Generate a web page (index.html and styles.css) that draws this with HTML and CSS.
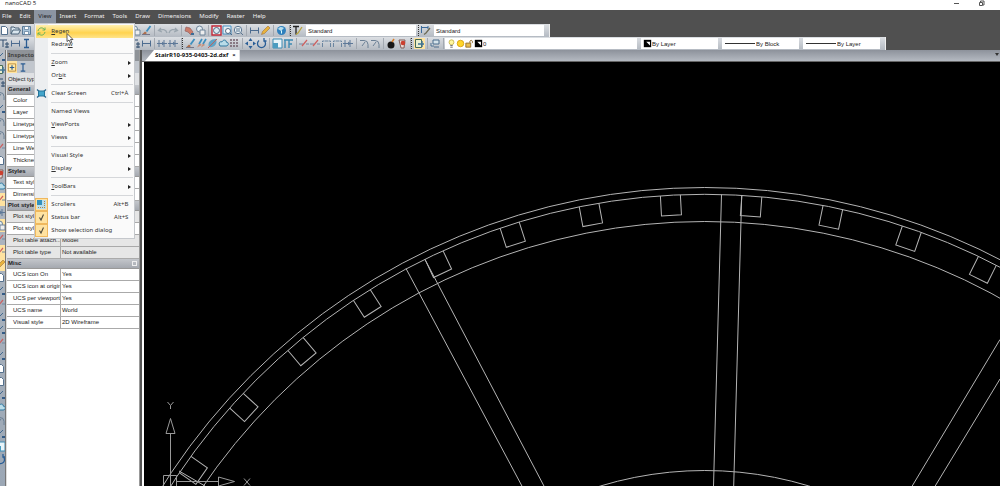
FILE: index.html
```html
<!DOCTYPE html>
<html lang="en">
<head>
<meta charset="utf-8">
<title>nanoCAD 5</title>
<link rel="stylesheet" href="styles.css">
</head>
<body>
<svg class="defs" aria-hidden="true">
  <symbol id="new" viewBox="0 0 11 11"><path d="M2.500 1.500h4l2 2v6h-6z" fill="#fff" stroke="#55708c"/></symbol>
  <symbol id="open" viewBox="0 0 11 11"><path d="M1 9V2h3l1 1h4v2M1 9l2-4h7.500L8.500 9z" fill="#d9e6ee" stroke="#4a6378"/></symbol>
  <symbol id="save" viewBox="0 0 11 11"><path d="M1.500 1.500h8v8h-8z" fill="#a8c4da" stroke="#5a7a96"/><path d="M3.500 1.500h4v3h-4zM3.500 6.500h4v3h-4z" fill="#fff" stroke="#5a7a96" stroke-width=".7"/></symbol>
  <symbol id="dim" viewBox="0 0 11 11"><path d="M1.500 2.500v6M9.500 2.500v6M1.500 5.500h8" stroke="#4d6c90" fill="none"/></symbol>
  <symbol id="dim2" viewBox="0 0 11 11"><path d="M2 2v7M7 2v7M0 5.500h10M5 4l2 1.500L5 7" stroke="#5d7898" fill="none"/></symbol>
  <symbol id="ibeam" viewBox="0 0 11 11"><path d="M3 1.500h5M3 9.500h5M5.500 1.500v8" stroke="#2b5c92" stroke-width="1.300"/></symbol>
  <symbol id="ord" viewBox="0 0 11 11"><path d="M1 2h7M4 2v7M8 4v6M6 6h4M6 9h4" stroke="#324e6e" fill="none"/></symbol>
  <symbol id="brush" viewBox="0 0 11 11"><path d="M9.500 1L5.500 6.500" stroke="#3e8fbe" stroke-width="1.800"/><path d="M1 9.500l3-3 2 1.500-2 1.500z" fill="#ae6e4c"/><path d="M1 9.500h8" stroke="#778"/></symbol>
  <symbol id="undo" viewBox="0 0 11 11"><path d="M10 8C9 4 5 4 2 5.500M4 3L1.500 5.500 5 7" stroke="#9aa5ae" stroke-width="1.300" fill="none"/></symbol>
  <symbol id="redo" viewBox="0 0 11 11"><path d="M1 8C2 4 6 4 9 5.500M7 3l2.500 2.500L6 7" stroke="#9aa5ae" stroke-width="1.300" fill="none"/></symbol>
  <symbol id="pan" viewBox="0 0 11 11"><path d="M2 2l4 1 3 4-2 3-3-3-3-1z" fill="#cb7c6a" stroke="#946060" stroke-width=".7"/><path d="M7 8h3v2H7z" fill="#3d6d97"/></symbol>
  <symbol id="zoomp" viewBox="0 0 11 11"><circle cx="4.500" cy="4" r="3" fill="#e4eef3" stroke="#6e8499"/><path d="M5 5h5v5H5z" fill="#eee" stroke="#6e8499"/></symbol>
  <symbol id="zoomr" viewBox="0 0 11 11"><path d="M1 1h9v9H1z" fill="#eee" stroke="#c02839" stroke-width="1.400"/><circle cx="5.500" cy="5.500" r="3" fill="#dceaf2" stroke="#506984"/></symbol>
  <symbol id="zoomw" viewBox="0 0 11 11"><path d="M1 1h8v8H1z" fill="#e3edf3" stroke="#4892c4"/><circle cx="6" cy="6" r="2.500" fill="#fff" stroke="#506984"/><path d="M8 8l2 2" stroke="#506984"/></symbol>
  <symbol id="zoomg" viewBox="0 0 11 11"><circle cx="5" cy="5" r="3.700" fill="#e8f0f4" stroke="#5b7691"/><path d="M3 4h4M3 6h4M8 8l2 2" stroke="#5b7691"/></symbol>
  <symbol id="pencil" viewBox="0 0 11 11"><path d="M1.500 9.500l1-3L8 1l2 2-5.500 5.500z" fill="#e8b33c" stroke="#a1723a" stroke-width=".6"/></symbol>
  <symbol id="globe" viewBox="0 0 11 11"><circle cx="5.500" cy="5.500" r="4.500" fill="#2f80bd"/><path d="M2 4c2-3 4-2 6-1L5 6z" fill="#b5dded"/><path d="M5.500 5.500v3" stroke="#dff"/></symbol>
  <symbol id="text" viewBox="0 0 11 11"><path d="M1 1.500h6M4 1.500v8" stroke="#222" stroke-width="1.300"/><path d="M10 2L6 8l-2 1.500" stroke="#b8a540" stroke-width="1.300" fill="none"/></symbol>
  <symbol id="dimst" viewBox="0 0 11 11"><path d="M1.500 1v7M1.500 2.500H8M8 1v3" stroke="#3b6a9a" fill="none"/><path d="M10 3L6 8l-2 1.500" stroke="#6d6b55" stroke-width="1.300" fill="none"/></symbol>
  <symbol id="hatch" viewBox="0 0 11 11"><path d="M1 9.500L3.500 5 6 7zM5 9.500L7 5l2 2z" fill="#c9907a"/><path d="M3 6l3-5M7 6l3-5" stroke="#3e8fbe" stroke-width="1.700"/></symbol>
  <symbol id="leaf" viewBox="0 0 11 11"><path d="M2 9C0 4 4 1 9 1c2 5-2 9-7 8z" fill="#5fa3c6"/><path d="M1 10l9-9" stroke="#c0635c"/></symbol>
  <symbol id="cloud" viewBox="0 0 11 11"><path d="M2 8C0 5 2 3 4 4c1-3 5-2 4 0 3 0 3 4 0 4z" fill="#b9dce9" stroke="#3078a0"/></symbol>
  <symbol id="grid" viewBox="0 0 11 11"><path d="M1 2h9M1 5h9M1 8h9" stroke="#735d6b" stroke-width="1.600" stroke-dasharray="2 1"/></symbol>
  <symbol id="move" viewBox="0 0 11 11"><path d="M5.500 0l2 3h-4zM5.500 11l2-3h-4zM0 5.500l3-2v4zM11 5.500l-3-2v4z" fill="#285d96"/></symbol>
  <symbol id="plus" viewBox="0 0 11 11"><path d="M1.500 1.500h8v8h-8z" fill="#ffe9a8" stroke="#b98b3c"/><path d="M5.500 3v5M3 5.500h5" stroke="#2b5c92" stroke-width="1.300"/></symbol>
  <symbol id="rotate" viewBox="0 0 11 11"><path d="M3 2.500a4 4 0 1 0 5 0M8 0v3h2.500" stroke="#285d96" stroke-width="1.300" fill="none"/></symbol>
  <symbol id="scale" viewBox="0 0 11 11"><path d="M1 1h9v9H1z" fill="#e8f4f9" stroke="#3d8bb3"/><path d="M1 5h5v5H1z" fill="#4b9cc0"/></symbol>
  <symbol id="stretch" viewBox="0 0 11 11"><path d="M1 2h9M2 2v8M6 2v8M6 6h3" stroke="#3d8bb3" stroke-width="1.400" fill="none"/></symbol>
  <symbol id="trim" viewBox="0 0 11 11"><path d="M0 6h4M7 6h3" stroke="#7288a0"/><path d="M3 8l5-6" stroke="#cd5f5f" stroke-width="1.200"/></symbol>
  <symbol id="brk" viewBox="0 0 11 11"><path d="M1.500 9V3h2M9.500 9V3h-2M4 3h3" stroke="#6a85a0" stroke-dasharray="4 1" fill="none"/></symbol>
  <symbol id="fillet" viewBox="0 0 11 11"><path d="M1 2.500h4q4 0 4 4V10M3 8l3-4" stroke="#6b8095" fill="none"/></symbol>
  <symbol id="bomb" viewBox="0 0 11 11"><circle cx="5" cy="7" r="3.500" fill="#171717"/><path d="M6 4l2-3" stroke="#d77c28" stroke-width="1.500"/></symbol>
  <symbol id="purge" viewBox="0 0 11 11"><path d="M2 2h6L7 10H4z" fill="#ecdcd8" stroke="#805e59"/><circle cx="6" cy="5" r="2.300" fill="#cb4030"/></symbol>
  <symbol id="layers" viewBox="0 0 11 11"><path d="M1.500 1.500h6v8h-6z" fill="#e9efce" stroke="#476b54"/><path d="M4 6h6M8 3v6" stroke="#417596" stroke-width="1.400"/></symbol>
  <symbol id="layprev" viewBox="0 0 11 11"><path d="M3 2h6v4H3zM4 9h5M1 5v3h3" stroke="#4b6d8c" fill="#d5e3ea"/></symbol>
  <symbol id="bulb" viewBox="0 0 11 11"><circle cx="5.500" cy="4" r="3" fill="#fff7a0" stroke="#b39e25" stroke-width=".8"/><path d="M4 8h3M4 10h3" stroke="#555"/></symbol>
  <symbol id="sun" viewBox="0 0 11 11"><circle cx="5.500" cy="5.500" r="4" fill="#ffd529" stroke="#d39c09"/></symbol>
  <symbol id="lock" viewBox="0 0 11 11"><path d="M1 5h6v5H1z" fill="#e7bd50" stroke="#8a6522"/><path d="M6 5V2.500q1.500-2 3 0V5" fill="none" stroke="#8a6522"/></symbol>
  <symbol id="swatch" viewBox="0 0 11 11"><path d="M1 1h9v9H1z" fill="#000"/><path d="M4 3.500h4.500V8z" fill="#fff"/></symbol>
  <symbol id="regen" viewBox="0 0 11 11"><path d="M2 5c1-4 5-4 7-1M9 1.500V4H6.500M9 6c-1 4-5 4-7 1M2 9.500V7h2.500" fill="none" stroke="#68b45c"/></symbol>
  <symbol id="screen" viewBox="0 0 11 11"><path d="M1 1.500l9 8M10 1.500l-9 8" stroke="#2b668c" stroke-width="1.300"/><path d="M2.500 3h6v5h-6z" fill="#43a5cb" stroke="#27779c"/></symbol>
  <symbol id="scroll" viewBox="0 0 11 11"><path d="M1 1h9v9H1z" fill="#b9deec"/><path d="M1 1h5v5H1z" fill="#3391bd"/><path d="M8.500 2v7M2 8.500h6" stroke="#b38745" stroke-dasharray="1 1"/></symbol>
  <symbol id="check" viewBox="0 0 11 11"><path d="M3.500 5.500L5 8 7.500 2.500" fill="none" stroke="#4d493c" stroke-width="1.100"/></symbol>
  <symbol id="line" viewBox="0 0 11 11"><path d="M1 9L8 2" stroke="#416990"/><path d="M7 8h3v2H7z" fill="#335b86"/></symbol>
</svg>

<header class="titlebar">
  <span class="app-name">nanoCAD 5</span>
  <svg class="window-icons" viewBox="0 0 36 10" aria-hidden="true"><path d="M2 3.500h5M27.500 2.500h3v3h-3zM28.500 2V1h3.500v4h-1" fill="none" stroke="#555"/></svg>
</header>

<nav class="menubar">
  <button>File</button><button>Edit</button>
  <div class="menu-holder">
    <button class="active">View</button>
    <div class="menu">
      <button class="item hot"><svg><use href="#regen"/></svg><span><u>R</u>egen</span></button>
      <button class="item"><i></i><span>Redra<u>w</u></span></button>
      <hr>
      <button class="item sub"><i></i><span><u>Z</u>oom</span></button>
      <button class="item sub"><i></i><span>Or<u>b</u>it</span></button>
      <hr>
      <button class="item"><svg><use href="#screen"/></svg><span>Clear Screen</span><kbd>Ctrl+À</kbd></button>
      <hr>
      <button class="item"><i></i><span>Named Views</span></button>
      <button class="item sub"><i></i><span><u>V</u>iewPorts</span></button>
      <button class="item sub"><i></i><span>Views</span></button>
      <hr>
      <button class="item sub"><i></i><span>Visual Style</span></button>
      <button class="item sub"><i></i><span><u>D</u>isplay</span></button>
      <hr>
      <button class="item sub"><i></i><span><u>T</u>oolBars</span></button>
      <hr>
      <button class="item on"><svg><use href="#scroll"/></svg><span>Scrollers</span><kbd>Alt+B</kbd></button>
      <button class="item on"><svg><use href="#check"/></svg><span>Status bar</span><kbd>Alt+S</kbd></button>
      <button class="item on"><svg><use href="#check"/></svg><span>Show selection dialog</span></button>
      <svg class="cursor" viewBox="0 0 8 11" aria-hidden="true"><path d="M1 .5v8l2-1.500 1.500 3 1.300-.6-1.300-2.900H7z" fill="#fff" stroke="#333" stroke-width=".8"/></svg>
    </div>
  </div>
  <button>Insert</button><button>Format</button><button>Tools</button><button>Draw</button><button>Dimensions</button><button>Modify</button><button>Raster</button><button>Help</button>
</nav>

<div class="toolbars">
  <div class="toolbar">
    <div class="group first"><button aria-label="New"><svg><use href="#new"/></svg></button><button aria-label="Open"><svg><use href="#open"/></svg></button><button aria-label="Save"><svg><use href="#save"/></svg></button></div>
    <div class="group"><button aria-label="Copy"><svg><use href="#zoomp"/></svg></button><button aria-label="Match"><svg><use href="#brush"/></svg></button></div>
    <div class="group"><button aria-label="Undo"><svg><use href="#undo"/></svg></button><button aria-label="Redo"><svg><use href="#redo"/></svg></button></div>
    <div class="group"><button aria-label="Pan"><svg><use href="#pan"/></svg></button><button aria-label="Zoom"><svg><use href="#zoomp"/></svg></button></div>
    <div class="group"><button aria-label="Zoom window"><svg><use href="#zoomr"/></svg></button><button aria-label="Zoom all"><svg><use href="#zoomw"/></svg></button><button aria-label="Zoom previous"><svg><use href="#zoomg"/></svg></button></div>
    <div class="group"><button aria-label="Measure"><svg><use href="#dim"/></svg></button><button aria-label="Edit"><svg><use href="#pencil"/></svg></button></div>
    <div class="group"><button aria-label="Web"><svg><use href="#globe"/></svg></button></div>
    <div class="group grip last"><button aria-label="Text style"><svg><use href="#text"/></svg></button></div>
    <select class="combo style" aria-label="Text style name"><option>Standard</option></select>
    <div class="group grip last"><button aria-label="Dimension style"><svg><use href="#dimst"/></svg></button></div>
    <select class="combo style" aria-label="Dimension style name"><option>Standard</option></select>
  </div>
  <div class="toolbar">
    <div class="group first"><button aria-label="Ordinate"><svg><use href="#ord"/></svg></button><button aria-label="Linear"><svg><use href="#dim"/></svg></button><button aria-label="Vertical"><svg><use href="#ibeam"/></svg></button></div>
    <div class="group"><button aria-label="Baseline"><svg><use href="#ord"/></svg></button><button aria-label="Chain"><svg><use href="#dim"/></svg></button></div>
    <div class="group"><button aria-label="Break left"><svg><use href="#dim2"/></svg></button><button aria-label="Break right"><svg><use href="#dim2"/></svg></button></div>
    <div class="group grip"><button aria-label="Paint"><svg><use href="#brush"/></svg></button><button aria-label="Hatch"><svg><use href="#hatch"/></svg></button><button aria-label="Fill"><svg><use href="#leaf"/></svg></button><button aria-label="Cloud"><svg><use href="#cloud"/></svg></button><button aria-label="Array"><svg><use href="#grid"/></svg></button></div>
    <div class="group"><button aria-label="Move"><svg><use href="#move"/></svg></button><button aria-label="Rotate"><svg><use href="#rotate"/></svg></button></div>
    <div class="group"><button aria-label="Scale"><svg><use href="#scale"/></svg></button><button aria-label="Stretch"><svg><use href="#stretch"/></svg></button></div>
    <div class="group"><button aria-label="Trim"><svg><use href="#trim"/></svg></button><button aria-label="Extend"><svg><use href="#trim"/></svg></button><button aria-label="Break"><svg><use href="#brk"/></svg></button><button aria-label="Break at point"><svg><use href="#brk"/></svg></button><button aria-label="Join"><svg><use href="#dim2"/></svg></button></div>
    <div class="group"><button aria-label="Chamfer"><svg><use href="#fillet"/></svg></button><button aria-label="Fillet"><svg><use href="#fillet"/></svg></button></div>
    <div class="group"><button aria-label="Explode"><svg><use href="#bomb"/></svg></button><button aria-label="Purge"><svg><use href="#purge"/></svg></button></div>
    <div class="group grip"><button class="lit" aria-label="Layers"><svg><use href="#layers"/></svg></button></div>
    <div class="group"><button aria-label="Previous layer"><svg><use href="#layprev"/></svg></button></div>
    <div class="combo layer"><svg><use href="#bulb"/></svg><svg><use href="#sun"/></svg><svg><use href="#lock"/></svg><svg><use href="#swatch"/></svg><select aria-label="Layer"><option>0</option></select></div>
    <div class="combo prop"><svg><use href="#swatch"/></svg><select aria-label="Color"><option>By Layer</option></select></div>
    <div class="combo prop"><span class="rule"></span><select aria-label="Linetype"><option>By Block</option></select></div>
    <div class="combo prop"><span class="rule"></span><select aria-label="Line weight"><option>By Layer</option></select></div>
  </div>
</div>

<main class="workspace">
  <div class="side">
    <button aria-label="Line"><svg><use href="#line"/></svg></button><button aria-label="Layers"><svg><use href="#layers"/></svg></button><button aria-label="Polyline"><svg><use href="#ord"/></svg></button><button aria-label="Arc"><svg><use href="#fillet"/></svg></button><button aria-label="Segment"><svg><use href="#line"/></svg></button><button aria-label="Circle"><svg><use href="#fillet"/></svg></button><button aria-label="Spline"><svg><use href="#fillet"/></svg></button><button aria-label="Cut"><svg><use href="#trim"/></svg></button><button aria-label="Block"><svg><use href="#new"/></svg></button><button aria-label="Image"><svg><use href="#purge"/></svg></button><button aria-label="Cloud"><svg><use href="#cloud"/></svg></button><button class="lit" aria-label="Snap"><svg><use href="#trim"/></svg></button><button aria-label="Point"><svg><use href="#dim2"/></svg></button><button class="lit" aria-label="Center"><svg><use href="#zoomp"/></svg></button><button aria-label="Tangent"><svg><use href="#trim"/></svg></button><button class="lit" aria-label="Near"><svg><use href="#trim"/></svg></button><button class="lit" aria-label="Node"><svg><use href="#pencil"/></svg></button><button aria-label="Window"><svg><use href="#new"/></svg></button><button aria-label="Divide"><svg><use href="#line"/></svg></button><button aria-label="Erase"><svg><use href="#trim"/></svg></button><button aria-label="Mirror"><svg><use href="#line"/></svg></button><button aria-label="Offset"><svg><use href="#line"/></svg></button><button aria-label="Align"><svg><use href="#trim"/></svg></button><button aria-label="Ray"><svg><use href="#line"/></svg></button><button aria-label="Page"><svg><use href="#new"/></svg></button><button aria-label="Sheet"><svg><use href="#new"/></svg></button><button aria-label="Slope"><svg><use href="#line"/></svg></button><button aria-label="Region"><svg><use href="#cloud"/></svg></button><button aria-label="Curve"><svg><use href="#fillet"/></svg></button><button aria-label="Level"><svg><use href="#line"/></svg></button><button aria-label="Frame"><svg><use href="#scale"/></svg></button><button aria-label="Orbit"><svg><use href="#rotate"/></svg></button>
  </div>

  <aside class="inspector">
    <h2>Inspector</h2>
    <div class="inspector-tools"><button class="lit" aria-label="Add"><svg><use href="#plus"/></svg></button><button aria-label="One"><svg><use href="#ibeam"/></svg></button></div>
    <div class="object-type">Object type</div>
    <table>
      <tr class="head"><th colspan="2">General</th></tr>
      <tr><td>Color</td><td></td></tr>
      <tr><td>Layer</td><td></td></tr>
      <tr><td>Linetype</td><td></td></tr>
      <tr><td>Linetype</td><td></td></tr>
      <tr><td>Line Weight</td><td></td></tr>
      <tr><td>Thickness</td><td></td></tr>
      <tr class="head"><th colspan="2">Styles</th></tr>
      <tr><td>Text style</td><td></td></tr>
      <tr><td>Dimension</td><td></td></tr>
      <tr class="head"><th colspan="2">Plot style</th></tr>
      <tr class="locked"><td>Plot style</td><td></td></tr>
      <tr><td>Plot style</td><td></td></tr>
      <tr class="locked"><td>Plot table attach...</td><td>Model</td></tr>
      <tr class="locked"><td>Plot table type</td><td>Not available</td></tr>
      <tr class="head"><th colspan="2">Misc<button class="fold" aria-label="Collapse"></button></th></tr>
      <tr><td>UCS icon On</td><td>Yes</td></tr>
      <tr><td>UCS icon at origin</td><td>Yes</td></tr>
      <tr><td>UCS per viewport</td><td>Yes</td></tr>
      <tr><td>UCS name</td><td>World</td></tr>
      <tr><td>Visual style</td><td>2D Wireframe</td></tr>
    </table>
  </aside>

  <section class="document">
    <div class="tabs"><div class="tab"><span>StairR10-935-0403-2d.dxf</span><button aria-label="Close tab">×</button></div><button class="tab-list" aria-label="Tab list"></button></div>
    <svg class="drawing" viewBox="144 62 856 424" preserveAspectRatio="xMinYMin slice" role="img" aria-label="Stair drawing">
      <g>
        <circle cx="704.700" cy="829" r="641.500"/>
        <circle cx="704.700" cy="829" r="634.700"/>
        <circle cx="704.700" cy="829" r="607.500"/>
        <circle cx="704.700" cy="829" r="358.500"/>
        <path d="M694.700 194.500v20h20v-20" transform="rotate(-3.100 704.700 829)"/>
        <path d="M694.700 194.500v20h20v-20" transform="rotate(4.260 704.700 829)"/>
        <path d="M694.700 194.500v20h20v-20" transform="rotate(11.650 704.700 829)"/>
        <path d="M694.700 194.500v20h20v-20" transform="rotate(19.050 704.700 829)"/>
        <path d="M694.700 194.500v20h20v-20" transform="rotate(26.450 704.700 829)"/>
        <path d="M694.700 194.500v20h20v-20" transform="rotate(-10.500 704.700 829)"/>
        <path d="M694.700 194.500v20h20v-20" transform="rotate(-17.900 704.700 829)"/>
        <path d="M694.700 194.500v20h20v-20" transform="rotate(-25.250 704.700 829)"/>
        <path d="M694.700 194.500v20h20v-20" transform="rotate(-32.700 704.700 829)"/>
        <path d="M694.700 194.500v20h20v-20" transform="rotate(-40.150 704.700 829)"/>
        <path d="M694.700 194.500v20h20v-20" transform="rotate(-47.550 704.700 829)"/>
        <path d="M694.700 194.500v20h20v-20" transform="rotate(-54.950 704.700 829)"/>
        <path d="M406 268.500L523 488M425 259.500L545 488M721.500 194.500L713.500 486M741.700 195.500L733.700 486M1000 339.500L911 488M1000 379L934 488"/>
        <path d="M179 471L205 486"/>
      </g>
      <g class="ucs">
        <path d="M170.500 486V433.500M166 433.500h9l-4.500-15zM163.500 486v-10.500h13V486M176.500 481.500h42M218.500 477v9l16-4.500z"/>
        <path d="M167.500 402l3 3.500 3-3.500M170.500 405.500v3.500M244 478.500l6 7M250 478.500l-6 7"/>
      </g>
    </svg>
  </section>
</main>
</body>
</html>
```
FILE: styles.css
```css
* { box-sizing: border-box; }
html, body { height: 100%; }
body {
  margin: 0;
  display: flex;
  flex-direction: column;
  overflow: hidden;
  background: #505050;
  color: #222;
  font: 6px/10px "Liberation Sans", Arial, sans-serif;
}
button {
  margin: 0;
  padding: 0;
  border: 0;
  background: none;
  color: inherit;
  font: inherit;
}
.defs { position: absolute; width: 0; height: 0; }

.titlebar {
  flex: none;
  display: flex;
  justify-content: space-between;
  height: 10px;
  padding: 0 12px 0 5px;
  background: #fff;
  color: #111;
  font: 6px/7px "Open Sans", sans-serif;
}
.window-icons { width: 36px; height: 10px; }

.menubar {
  flex: none;
  display: flex;
  height: 14px;
  background: #505050;
  color: #f0f0f0;
  font: 6px/13px "Noto Sans", sans-serif;
}
.menubar > button, .menu-holder > button { padding: 0 4px; height: 13px; }
.menubar > button:first-child { padding-left: 2px; }
.menu-holder { position: relative; }
.menu-holder > .active { background: #8c95a2; color: #222; }

.menu {
  position: absolute;
  z-index: 5;
  top: 13px;
  left: 0;
  width: 101px;
  padding: 1px;
  border: 1px solid #c5c8cc;
  background: linear-gradient(90deg, #eceef0 13px, #fafafa 13px);
  color: #333;
}
.menu .item {
  position: relative;
  display: flex;
  align-items: center;
  width: 100%;
  height: 13px;
  padding-right: 5px;
  text-align: left;
}
.item > svg, .item > i { flex: none; width: 11px; height: 11px; margin-right: 4px; }
.item > span { white-space: nowrap; }
.item > kbd { margin-left: auto; font: inherit; }
.item.hot { background: linear-gradient(#fff0b0, #ffd34f 60%, #ffe48a); }
.item.on > svg { background: #ffe2a0; outline: 1px solid #efb85e; }
.item.sub::after {
  content: "";
  margin-left: auto;
  margin-right: -3px;
  border: 2px solid transparent;
  border-left: 3px solid #222;
  border-right: 0;
}
.menu hr { height: 1px; margin: 2px 0 2px 15px; border: 0; background: #d5d7da; }
.cursor { position: absolute; top: 9px; left: 31px; width: 8px; height: 11px; }

.toolbars { flex: none; display: flex; flex-direction: column; align-items: flex-start; }
.toolbar {
  display: flex;
  align-items: center;
  height: 13px;
  padding-right: 3px;
  background: linear-gradient(#dcdfe3, #b4bac2);
  border-right: 1px solid #eee;
}
.group { display: flex; align-items: center; height: 11px; padding: 0 2px; border-right: 1px solid #a3a9b1; }
.group.first { width: 131px; margin-left: -3px; border: 0; }
.group.grip { border-left: 1px dotted #333; }
.group.last { padding: 0 1px; border-right: 0; }
.group button, .group svg { width: 11px; height: 11px; display: block; }
.lit { background: #ffe3a0; }
.combo {
  display: flex;
  align-items: center;
  height: 11px;
  margin: 0 2px;
  border: 0;
  background: #fff;
  color: #222;
  font: 6px/10px "Liberation Sans", sans-serif;
}
.combo svg { flex: none; width: 9px; height: 9px; }
select { appearance: none; border: 0; padding: 0; background: none; color: inherit; font: inherit; flex: 1; min-width: 0; }
.toolbar .style { flex: none; width: 110px; padding-left: 2px; }
.combo.layer { width: 192px; margin-left: 1px; padding-left: 2px; }
.combo.prop { width: 77px; padding-left: 2px; }
.rule { width: 30px; height: 1px; margin: 0 1px; background: #333; }

.workspace { flex: 1; min-height: 0; display: flex; }
.side {
  flex: none;
  width: 6px;
  overflow: hidden;
  background: linear-gradient(#b7bdc5, #9ba7b5);
  border-right: 1px solid #777;
}
.side button { display: block; width: 11px; height: 13px; margin-left: -5px; }
.side svg { display: block; width: 11px; height: 11px; }

.inspector { flex: none; width: 134px; background: #fff; border-right: 1px solid #999; border-left: 1px solid #ddd; }
.inspector h2 { margin: 0; height: 11px; padding-left: 1px; background: #8f9398; color: #444; font: bold 6px/10px "Noto Sans", sans-serif; }
.inspector-tools { display: flex; gap: 1px; height: 12px; background: #c1c6cd; }
.inspector-tools svg { display: block; width: 10px; height: 11px; }
.object-type { height: 12px; padding-left: 1px; background: #dfe1e4; line-height: 12px; }
table { width: 100%; table-layout: fixed; border-collapse: separate; border-spacing: 0; }
td, th { padding: 0; white-space: nowrap; overflow: hidden; border-bottom: 1px solid #aaa; text-align: left; }
td { height: 12px; line-height: 11px; padding-left: 1px; }
td:first-child { padding-left: 6px; border-right: 1px solid #aaa; }
.head th { height: 10px; padding-left: 1px; line-height: 9px; background: linear-gradient(#c3c6cb, #a5a9b0); border-color: #999; }
table td:first-child { width: 54px; }
.fold { float: right; width: 5px; height: 5px; margin: 2px; border: 1px solid #eee; }
.locked td { background: #e6e6e6; }
table { display: grid; grid-template-columns: 54px 1fr; }
tbody, tr { display: contents; }
table td:first-child { width: auto; }
.head th { grid-column: 1 / -1; }

.document { flex: 1; min-width: 0; display: flex; flex-direction: column; border-left: 2px solid #555; background: #fff; }
.tabs { flex: none; display: flex; justify-content: space-between; align-items: center; height: 12px; padding-left: 3px; background: linear-gradient(#8d929b, #b4b9c1); border-bottom: 1px solid #666; }
.tab { display: flex; gap: 4px; height: 11px; padding: 0 4px 0 10px; background: #fff; clip-path: polygon(9px 0, 100% 0, 100% 100%, 0 100%); font: bold 6px/11px "Open Sans", sans-serif; color: #111; }
.tab-list { border: 2px solid transparent; border-top: 3px solid #333; margin-right: 1px; }
.drawing { flex: 1; min-height: 0; width: auto; margin-left: 2px; background: #000; }
.drawing path, .drawing circle { fill: none; stroke: #b4b4b4; stroke-width: 1; }
.drawing .ucs path { stroke: #999; }
```
